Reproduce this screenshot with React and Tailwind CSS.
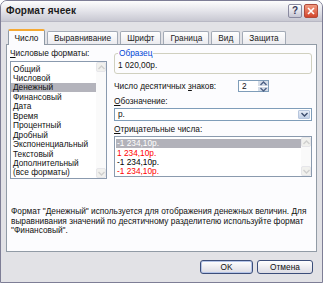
import React from 'react'

const formats = [
  'Общий',
  'Числовой',
  'Денежный',
  'Финансовый',
  'Дата',
  'Время',
  'Процентный',
  'Дробный',
  'Экспоненциальный',
  'Текстовый',
  'Дополнительный',
  '(все форматы)',
]

const negatives = [
  { text: '-1 234,10р.', cls: 'bg-[#b2b2ba] text-white' },
  { text: '1 234,10р.', cls: 'text-[#ff0000]' },
  { text: '-1 234,10р.', cls: 'text-black' },
  { text: '-1 234,10р.', cls: 'text-[#ff0000]' },
]

const tabs = ['Выравнивание', 'Шрифт', 'Граница', 'Вид', 'Защита']

function Chevron({ up, color = '#4d6185' }) {
  return (
    <svg width="7" height="5" viewBox="0 0 7 5">
      <path d={up ? 'M0.5 4 L3.5 1 L6.5 4' : 'M0.5 1 L3.5 4 L6.5 1'} fill="none" stroke={color} strokeWidth="1.4" />
    </svg>
  )
}

function Scrollbar() {
  return (
    <div className="w-[10px] flex flex-col justify-between bg-[#fafafa]">
      <div className="h-[10px] bg-[#f1f1ee] border border-[#e6e6ea] rounded-[2px] flex items-center justify-center">
        <Chevron up color="#cfcfcf" />
      </div>
      <div className="h-[10px] bg-[#f1f1ee] border border-[#e6e6ea] rounded-[2px] flex items-center justify-center">
        <Chevron color="#cfcfcf" />
      </div>
    </div>
  )
}

export default function App() {
  return (
    <div className="w-[323px] h-[283px] bg-[#e2e2e6] border border-[#7e7e96] rounded-t-[7px] flex flex-col font-['Liberation_Sans',sans-serif] text-[8.3px] leading-none text-[#111] overflow-hidden">
      {/* title bar */}
      <div className="h-[21px] shrink-0 bg-gradient-to-b from-[#fdfdfd] via-[#e4e4ea] to-[#c8c8d2] flex items-center justify-between pl-[5px] pr-[4px] border-b border-[#b8b8c4]">
        <span className="text-[10px] font-bold text-[#1c1c1c] tracking-[0.1px]">Формат ячеек</span>
        <div className="flex gap-[2px]">
          <div className="w-[14px] h-[14px] rounded-[2px] border border-[#8a8aa0] bg-gradient-to-b from-[#ffffff] to-[#c6c6d4] flex items-center justify-center text-[10px] font-bold text-[#3a3a5a]">?</div>
          <div className="w-[14px] h-[14px] rounded-[2px] border border-[#b04a3a] bg-gradient-to-b from-[#f09a80] to-[#d2432a] flex items-center justify-center">
            <svg width="8" height="8" viewBox="0 0 8 8">
              <path d="M1 1 L7 7 M7 1 L1 7" stroke="white" strokeWidth="1.6" />
            </svg>
          </div>
        </div>
      </div>

      <div className="flex-1 flex flex-col px-[5px] pt-[6px]">
        {/* tabs */}
        <div className="h-[16px] flex items-end pl-[2px] relative z-10">
          <div className="h-[16px] w-[37px] -mb-px bg-[#fcfcfe] border border-[#8f9aa6] border-b-0 border-t-[#f5a934] border-t-2 rounded-t-[2px] flex items-center justify-center">
            Число
          </div>
          {tabs.map((t) => (
            <div
              key={t}
              className="h-[13px] ml-[2px] px-[6px] bg-gradient-to-b from-[#ffffff] to-[#ebebef] border border-[#a3aab6] border-b-0 rounded-t-[2px] flex items-center justify-center text-[#222]"
            >
              {t}
            </div>
          ))}
        </div>

        {/* panel */}
        <div className="h-[208px] bg-[#fcfcfe] border border-[#919ba6] flex flex-col px-[3px] pt-[3px]">
          <div className="flex gap-[7px]">
            {/* left column */}
            <div className="w-[97px] flex flex-col">
              <div className="h-[10px] flex items-center">
                <span><u>Ч</u>исловые форматы:</span>
              </div>
              <div className="mt-[3px] h-[118px] border border-[#8a9aae] bg-white flex">
                <div className="flex-1 flex flex-col pt-[2px]">
                  {formats.map((f) => (
                    <div
                      key={f}
                      className={`h-[9.45px] flex items-center pl-[2px] ${f === 'Денежный' ? 'bg-[#b4b4bc]' : ''}`}
                    >
                      {f}
                    </div>
                  ))}
                </div>
                <Scrollbar />
              </div>
            </div>

            {/* right column */}
            <div className="flex-1 flex flex-col pr-[1px]">
              <div className="relative mt-[5px] h-[21px] border border-[#d0d0bf] rounded-[3px] flex items-center pl-[3px] pt-[3px]">
                <span className="absolute -top-[5px] left-[3px] px-[1px] bg-[#fcfcfe] text-[#0046d5]">Образец</span>
                1 020,00р.
              </div>

              <div className="mt-[6px] flex items-center">
                <span className="w-[124px]">Число десятичных <u>з</u>наков:</span>
                <div className="h-[12px] w-[31px] border border-[#7f9db9] bg-white flex">
                  <div className="flex-1 flex items-center pl-[3px]">2</div>
                  <div className="w-[10px] flex flex-col bg-[#d5dde8]">
                    <div className="flex-1 flex items-center justify-center border-b border-white">
                      <Chevron up />
                    </div>
                    <div className="flex-1 flex items-center justify-center">
                      <Chevron />
                    </div>
                  </div>
                </div>
              </div>

              <div className="mt-[4px] h-[10px] flex items-center">
                <span><u>О</u>бозначение:</span>
              </div>
              <div className="mt-[2px] h-[13px] border border-[#7f9db9] bg-white flex">
                <div className="flex-1 flex items-center pl-[3px]">р.</div>
                <div className="w-[12px] m-[1px] rounded-[1px] bg-gradient-to-b from-[#e6ecf6] to-[#c2d0e6] border border-[#b7c6dd] flex items-center justify-center">
                  <Chevron color="#3d4d6d" />
                </div>
              </div>

              <div className="mt-[3px] h-[10px] flex items-center">
                <span><u>О</u>трицательные числа:</span>
              </div>
              <div className="mt-[2px] h-[41px] border border-[#8a9aae] bg-white flex">
                <div className="flex-1 flex flex-col pt-[2px] pl-[1px]">
                  {negatives.map((n, i) => (
                    <div key={i} className={`h-[9.4px] flex items-center pl-[1px] ${n.cls}`}>
                      {n.text}
                    </div>
                  ))}
                </div>
                <Scrollbar />
              </div>
            </div>
          </div>

          <p className="mt-[28px] pl-[1px] leading-[9.6px]">
            Формат "Денежный" используется для отображения денежных величин. Для
            <br />
            выравнивания значений по десятичному разделителю используйте формат
            <br />
            "Финансовый".
          </p>
        </div>

        {/* buttons */}
        <div className="mt-[8px] flex justify-end gap-[4px] pr-[4px]">
          <button className="w-[53px] h-[14px] rounded-[3px] border border-[#3c4e7a] bg-gradient-to-b from-[#ffffff] to-[#dcdce4] shadow-[inset_0_0_0_1px_#b4c4e8] flex items-center justify-center">
            OK
          </button>
          <button className="w-[56px] h-[14px] rounded-[3px] border border-[#3c4e7a] bg-gradient-to-b from-[#ffffff] to-[#dcdce4] flex items-center justify-center">
            Отмена
          </button>
        </div>
      </div>
    </div>
  )
}
